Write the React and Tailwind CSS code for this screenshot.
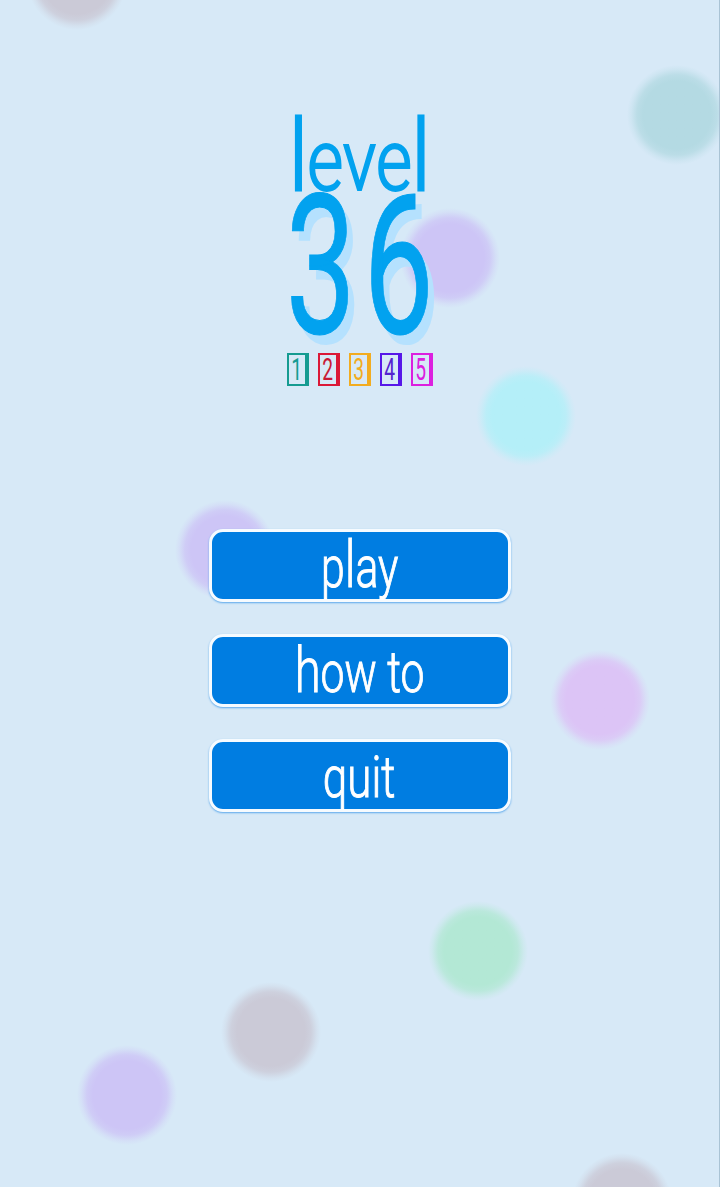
const bubbles = [
  { pos: 'left-[27px] -top-[70px]', color: 'text-[#cbcad7]' },
  { pos: 'left-[627px] top-[65px]', color: 'text-[#b4dae3]' },
  { pos: 'left-[400px] top-[208px]', color: 'text-[#cdc5f6]' },
  { pos: 'left-[476px] top-[366px]', color: 'text-[#b4eff8]' },
  { pos: 'left-[175px] top-[500px]', color: 'text-[#cdc5f6]' },
  { pos: 'left-[550px] top-[650px]', color: 'text-[#dcc4f6]' },
  { pos: 'left-[428px] top-[901px]', color: 'text-[#b3e8d5]' },
  { pos: 'left-[221px] top-[982px]', color: 'text-[#cbcad7]' },
  { pos: 'left-[77px] top-[1045px]', color: 'text-[#cdc5f6]' },
  { pos: 'left-[572px] top-[1153px]', color: 'text-[#cbcad7]' },
]

const stages = [
  { n: 1, color: 'border-[#159b91] text-[#159b91]' },
  { n: 2, color: 'border-[#db1837] text-[#c91b35]' },
  { n: 3, color: 'border-[#f2ac20] text-[#f2ac20]' },
  { n: 4, color: 'border-[#5717e8] text-[#5524cf]' },
  { n: 5, color: 'border-[#dc20df] text-[#dc20df]' },
]

function Bubble({ pos, color }) {
  return (
    <div
      className={`absolute h-[100px] w-[100px] bg-[radial-gradient(circle,currentColor_34px,color-mix(in_srgb,currentColor_80%,transparent)_40px,color-mix(in_srgb,currentColor_25%,transparent)_46px,transparent_50px)] ${pos} ${color}`}
    />
  )
}

function MenuButton({ children, squeeze }) {
  return (
    <button
      type="button"
      className="flex h-[73px] w-[302px] justify-center rounded-[14px] border-[3px] border-[#f6fbff] bg-[#007de1] text-white shadow-[0_1px_2px_#5ba9ec]"
    >
      <span
        className={`inline-block h-[67px] whitespace-nowrap pt-px text-[57px] leading-[70px] font-light [-webkit-text-stroke:1px_currentColor] ${squeeze}`}
      >
        {children}
      </span>
    </button>
  )
}

export default function App() {
  return (
    <main className="relative h-[1187px] w-[720px] overflow-hidden border-r border-[#a9c3d5] bg-[#d7e9f7] font-['Roboto','Liberation_Sans',sans-serif]">
      {bubbles.map((b) => (
        <Bubble key={b.pos} {...b} />
      ))}

      <div className="relative flex flex-col items-center pt-[102px]">
        <h1 className="flex flex-col items-center text-[#02a2ef]">
          {/* the two l's stand taller than the rest of the word */}
          <span className="h-[93px] scale-x-[0.81] pt-1 text-[86px] leading-[110px] font-light [-webkit-text-stroke:2px_currentColor]">
            <span className="text-[98px] leading-none [-webkit-text-stroke:3px_currentColor]">l</span>
            eve
            <span className="text-[98px] leading-none [-webkit-text-stroke:3px_currentColor]">l</span>
          </span>
          <span className="-mr-[8px] h-[141px] scale-x-[0.64] text-[195px] leading-[144px] font-normal tracking-[12px] [-webkit-text-stroke:1px_currentColor] [text-shadow:10px_10px_0_#b5e1fe]">
            36
          </span>
        </h1>

        <div className="mt-[17px] flex gap-[9px]">
          {stages.map(({ n, color }) => (
            <div
              key={n}
              className={`flex h-[33px] w-[22px] items-center justify-center border-2 border-r-4 ${color}`}
            >
              <span className="scale-x-[0.62] text-[31px] leading-[29px]">{n}</span>
            </div>
          ))}
        </div>

        <nav className="mt-[143px] flex flex-col gap-8">
          <MenuButton squeeze="scale-x-[0.75]">
            p<span className="text-[64px] leading-none">l</span>ay
          </MenuButton>
          <MenuButton squeeze="scale-x-[0.75]">
            <span className="text-[63px] leading-none">h</span>ow to
          </MenuButton>
          <MenuButton squeeze="scale-x-[0.77]">quit</MenuButton>
        </nav>
      </div>
    </main>
  )
}
